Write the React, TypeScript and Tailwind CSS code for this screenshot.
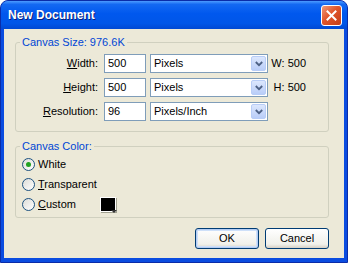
import type { ReactNode } from 'react';

function Chevron() {
  return (
    <svg width="8" height="6" viewBox="0 0 8 6" className="block">
      <path d="M0.8 1 L4 4.2 L7.2 1" fill="none" stroke="#4d6185" strokeWidth="1.8" />
    </svg>
  );
}

function Select({ value }: { value: string }) {
  return (
    <div className="flex h-[19px] w-[118px] items-center border border-[#7f9db9] bg-white">
      <span className="flex-1 pl-[3px] leading-none">{value}</span>
      <span className="mr-[1px] flex h-[15px] w-[15px] items-center justify-center rounded-[2px] border border-[#b8cdf7] bg-[linear-gradient(to_bottom,#dce7fd,#b9cdf8)]">
        <Chevron />
      </span>
    </div>
  );
}

function SizeRow({ u, rest, value, unit, info }: { u: string; rest: string; value: string; unit: string; info?: string }) {
  return (
    <div className="flex h-[19px] items-center">
      <label className="w-[88px] pr-[6px] text-right">
        <span className="underline">{u}</span>
        {rest}
      </label>
      <div className="flex h-[19px] w-[42px] items-center border border-[#7f9db9] bg-white pl-[3px]">{value}</div>
      <div className="ml-[4px]">
        <Select value={unit} />
      </div>
      {info && <span className="w-[38px] text-right">{info}</span>}
    </div>
  );
}

function Radio({ checked, children }: { checked?: boolean; children: ReactNode }) {
  return (
    <div className="flex items-center gap-[3px]">
      <span className="flex h-[13px] w-[13px] items-center justify-center rounded-full border border-[#1c5180] bg-[linear-gradient(135deg,#dcdcd7,#ffffff)]">
        {checked && <span className="h-[5px] w-[5px] rounded-full bg-[#21a121]" />}
      </span>
      <span>{children}</span>
    </div>
  );
}

function GroupBox({ title, children, className }: { title: string; children: ReactNode; className?: string }) {
  return (
    <fieldset className={`rounded-[3px] border border-[#d0d0bf] ${className ?? ''}`}>
      <legend className="ml-[4px] px-[2px] leading-[14px] text-[#0046d5]">{title}</legend>
      {children}
    </fieldset>
  );
}

function Button({ children, isDefault }: { children: ReactNode; isDefault?: boolean }) {
  return (
    <button
      className={`h-[21px] w-[64px] rounded-[3px] border border-[#003c74] bg-[linear-gradient(to_bottom,#ffffff,#f0f0ea_80%,#d6d0c5)] leading-none ${
        isDefault ? 'shadow-[inset_0_0_0_1px_#b5cdf3,inset_0_0_0_2px_#cee0f9]' : ''
      }`}
    >
      {children}
    </button>
  );
}

export default function App() {
  return (
    <div className="h-[263px] w-[348px] bg-white font-['Liberation_Sans',Arial,sans-serif] text-[11px] text-black">
      <div className="flex h-full flex-col rounded-t-[8px] border border-[#0a2ca8] bg-[#0a4ce0]">
        {/* Title bar */}
        <div className="flex h-[28px] items-center justify-between rounded-t-[7px] bg-[linear-gradient(to_bottom,#4d9cff_0%,#1469f2_12%,#0058ee_45%,#0056e8_80%,#0049d3_100%)] pl-[7px] pr-[5px]">
          <span className="text-[12px] font-bold text-white [text-shadow:1px_1px_0_#0a1e78]">New Document</span>
          <span className="flex h-[21px] w-[21px] items-center justify-center rounded-[3px] border border-white bg-[linear-gradient(135deg,#f09a7a,#e0552b_45%,#c43e18)]">
            <svg width="11" height="11" viewBox="0 0 11 11">
              <path d="M1.5 1.5 L9.5 9.5 M9.5 1.5 L1.5 9.5" stroke="white" strokeWidth="2" strokeLinecap="square" />
            </svg>
          </span>
        </div>

        {/* Client area */}
        <div className="mx-[3px] mb-[4px] flex flex-1 flex-col bg-[#ece9d8] pl-[11px] pr-[15px]">
          <GroupBox title="Canvas Size: 976.6K" className="mt-[6px]">
            <div className="flex flex-col gap-[5px] pt-[5px] pb-[10px]">
              <SizeRow u="W" rest="idth:" value="500" unit="Pixels" info="W: 500" />
              <SizeRow u="H" rest="eight:" value="500" unit="Pixels" info="H: 500" />
              <SizeRow u="R" rest="esolution:" value="96" unit="Pixels/Inch" />
            </div>
          </GroupBox>

          <GroupBox title="Canvas Color:" className="mt-[7px]">
            <div className="flex flex-col pl-[6px] pt-[1px] pb-[3px]">
              <div className="flex h-[20px] items-center">
                <Radio checked>White</Radio>
              </div>
              <div className="flex h-[20px] items-center">
                <Radio>
                  <span className="underline">T</span>ransparent
                </Radio>
              </div>
              <div className="flex h-[20px] items-center">
                <div className="w-[78px]">
                  <Radio>
                    <span className="underline">C</span>ustom
                  </Radio>
                </div>
                <span className="relative flex h-[15px] w-[16px] items-center justify-center border border-white shadow-[1px_1px_0_#a0a090]">
                  <span className="h-full w-full bg-black" />
                  <span className="absolute right-[-2px] bottom-[-2px] h-0 w-0 border-x-[3px] border-t-[3px] border-x-transparent border-t-[#333]" />
                </span>
              </div>
            </div>
          </GroupBox>

          <div className="mt-[10px] flex justify-end gap-[6px]">
            <Button isDefault>OK</Button>
            <Button>Cancel</Button>
          </div>
        </div>
      </div>
    </div>
  );
}
